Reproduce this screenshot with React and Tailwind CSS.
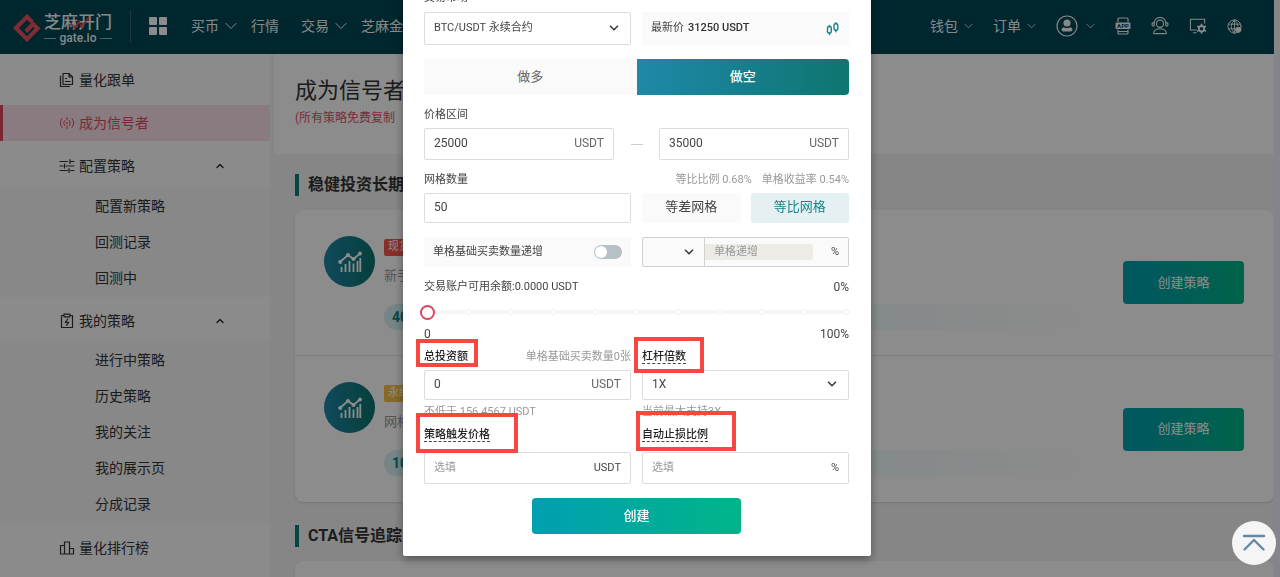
import { useState } from "react";
import { FiChevronDown, FiChevronUp } from "react-icons/fi";

/* ================= ICONS ================= */
const stroke = {
  fill: "none",
  stroke: "currentColor",
  strokeWidth: 1.2,
  strokeLinecap: "round",
  strokeLinejoin: "round",
};

const CopyIcon = () => (
  <svg viewBox="0 0 16 16" className="w-4 h-4" {...stroke}>
    <path d="M4 1.500h6l3.500 3.500v7.500H4zM10 1.500V5h3.500M6.500 6.500h1M6.500 9.500h4.500M1.500 4v10.500h9" />
  </svg>
);

const SignalIcon = () => (
  <svg viewBox="0 0 16 16" className="w-4 h-4" {...stroke} strokeWidth="1">
    <path d="M8 2.500v2.500M8 11v2.500M5.500 5.500q-1.800 2.500 0 5M3 3.500q-3.500 4.500 0 9M10.500 5.500q1.800 2.500 0 5M13 3.500q3.500 4.500 0 9" />
    <circle cx="8" cy="8" r=".9" fill="currentColor" stroke="none" />
  </svg>
);

const SlidersIcon = () => (
  <svg viewBox="0 0 16 16" className="w-4 h-4" {...stroke}>
    <path d="M1 3.500h7.500M11.500 3.500H15M11 1.500v4M1 8h3M7 8h8M5.500 6v4M1 12.500h7.500M11.500 12.500H15M10 10.500v4" />
  </svg>
);

const ClipboardIcon = () => (
  <svg viewBox="0 0 16 16" className="w-4 h-4" {...stroke}>
    <path d="M5 2.500H2.500v12h11v-12H11M5 1.200h6v2.600H5zM8.800 6 6.300 9.300h3.400L7.400 12.300" />
  </svg>
);

const RankIcon = () => (
  <svg viewBox="0 0 16 16" className="w-4 h-4" {...stroke}>
    <path d="M1.500 5.500h4v8.500h-4zM5.500 2h5v12h-5zM10.500 8.500h4V14h-4z" />
  </svg>
);

const ThinChevron = ({ small }) => (
  <svg viewBox="0 0 12 8" className={small ? "w-[9px] h-1.5" : "w-3 h-2"} {...stroke} strokeWidth="1">
    <path d="m1 1.500 5 5 5-5" />
  </svg>
);

const LogoMark = () => (
  <svg viewBox="0 0 27 27" className="w-7 h-7" fill="none" stroke="#e8525c" strokeWidth="4">
    <path d="m18.600 7.800-5.100-5L2.800 13.500l10.700 10.700 10.200-10.300-4.200-4.200-7.200 7.200" />
  </svg>
);

const LogoTick = () => (
  <svg viewBox="0 0 20 14" className="absolute left-[26px] top-1 w-5 h-3.5" fill="none" stroke="#f0454f" strokeWidth="1.500">
    <path d="m1 8 4 4.500L9 5.500l2.500 5.500L19 1" />
  </svg>
);

const ChartIcon = () => (
  <svg viewBox="0 0 24 22" className="w-6 h-6" fill="none" stroke="#fff">
    <path d="M3.500 21v-5M7.500 21v-8M11.500 21V10M15.500 21v-8.500M19.500 21v-11M22.300 21V7" strokeWidth="1.800" />
    <path d="m2 11 8-7 5.500 4L22 2.500" strokeWidth="1.800" />
    <g fill="#fff" stroke="none">
      <circle cx="2.200" cy="11" r="2" />
      <circle cx="10" cy="4" r="2" />
      <circle cx="15.500" cy="8" r="2" />
      <circle cx="22" cy="2.500" r="2" />
    </g>
  </svg>
);

const UserIcon = () => (
  <svg viewBox="0 0 22 22" className="w-[22px] h-[22px]" {...stroke}>
    <circle cx="11" cy="11" r="10" />
    <circle cx="11" cy="8" r="3.600" fill="currentColor" stroke="none" />
    <path d="M5.500 14.500q0-2 2.500-2.300 3 1.800 6 0 2.500.3 2.500 2.300 0 2-2 2h-7q-2 0-2-2z" fill="currentColor" stroke="none" />
  </svg>
);

const AppIcon = () => (
  <svg viewBox="0 0 16 18" className="w-4 h-[18px]" {...stroke}>
    <path d="M3 4.500V2q0-1 1-1h8q1 0 1 1v2.500M3 13v3q0 1 1 1h8q1 0 1-1v-3M3 14.500h10" />
    <rect x=".5" y="5.500" width="15" height="6.500" rx="1" fill="currentColor" stroke="none" />
    <text x="8" y="11" textAnchor="middle" fontSize="6" fontWeight="700" fill="#004554" stroke="none">APP</text>
  </svg>
);

const ServiceIcon = () => (
  <svg viewBox="0 0 20 20" className="w-[18px] h-[18px]" {...stroke}>
    <circle cx="10" cy="7.500" r="4" />
    <path d="M3.500 6.500a6.500 6 0 0 1 13 0M3.500 6.500H2q-.8 0-.8 1v1.500q0 1 .8 1h1.500zM16.500 6.500H18q.8 0 .8 1v1.500q0 1-.8 1h-1.500zM4 18.500q-1.500 0-1-1.500 1.500-4 7-4t7 4q.5 1.500-1 1.500z" />
  </svg>
);

const MonitorIcon = () => (
  <svg viewBox="0 0 20 18" className="w-[18px] h-4" {...stroke}>
    <path d="M8 13.500H1.500v-12h16V6M5 16.500h3" />
    <circle cx="14" cy="12" r="3" strokeWidth="2" />
    <path d="M14 7.200v.8M14 16v.8M9.800 9.600l.8.4M17.400 14l.8.4M9.800 14.400l.8-.4M17.400 10l.8-.4" strokeWidth="2" />
  </svg>
);

const GlobeIcon = () => (
  <svg viewBox="0 0 16 16" className="w-[15px] h-[15px]" {...stroke} strokeWidth="1">
    <circle cx="8" cy="8" r="7" />
    <path d="M8 1v14M1.500 5.500h13M1.500 10.500H9M8 1Q4.500 4 4.500 8T8 15M8 1q3.500 3 3.500 6" />
    <circle cx="12" cy="11.500" r="2.800" fill="currentColor" />
  </svg>
);

const CandleIcon = () => (
  <svg viewBox="0 0 14 14" className="w-3.5 h-3.5" {...stroke} stroke="#16868a" strokeWidth="1.400">
    <rect x="1.500" y="4.500" width="3.800" height="6.500" rx="1.500" />
    <rect x="8" y="1.800" width="3.800" height="6.500" rx="1.500" />
    <path d="M3.400 3.500v1M3.400 11v1.500M9.900.7v1M9.900 8.300v1.500" />
  </svg>
);

/* ================= DATA ================= */
const configLinks = ["配置新策略", "回测记录", "回测中"];
const strategyLinks = ["进行中策略", "历史策略", "我的关注", "我的展示页", "分成记录"];

const strategies = [
  { type: "现货", desc: "新手", tag: "40", badge: "bg-[#fa5548]" },
  { type: "永续", desc: "网格", tag: "10", badge: "bg-[#f7bd48]" },
];

/* ================= HEADER ================= */
function NavLink({ children, arrow, small }) {
  return (
    <a href="#" className="flex items-center gap-1.5 whitespace-nowrap">
      {children}
      {arrow && <ThinChevron small={small} />}
    </a>
  );
}

function Header() {
  return (
    <header className="h-[54px] bg-[#004554] text-[#f4f8f9] text-sm flex items-center justify-between pl-[13px] pr-8">
      <div className="flex items-center pb-0.5">
        <a href="#" className="flex items-center gap-[3px] pt-1">
          <LogoMark />
          <span className="relative flex flex-col">
            <span className="text-[17px] leading-5 font-medium">芝麻开门</span>
            <LogoTick />
            <span className="flex items-center gap-1 text-xs leading-3 font-medium">
              <i className="h-px flex-1 bg-white/60" />
              gate.io
              <i className="h-px flex-1 bg-white/60" />
            </span>
          </span>
        </a>
        <div className="w-px h-8 bg-white/20 ml-[18px] mr-[18px]" />
        <button aria-label="菜单" className="grid grid-cols-2 gap-0.5 mr-6">
          <i className="w-2 h-2 rounded-[1px] bg-white" />
          <i className="w-2 h-2 rounded-[1px] bg-white" />
          <i className="w-2 h-2 rounded-[1px] bg-white" />
          <i className="w-2 h-2 rounded-[1px] bg-white" />
        </button>
        <nav className="flex items-center gap-3.5">
          <NavLink arrow>买币</NavLink>
          <span className="mr-2">
            <NavLink>行情</NavLink>
          </span>
          <NavLink arrow>交易</NavLink>
          <NavLink>芝麻金</NavLink>
        </nav>
      </div>

      <div className="flex items-center gap-5 pb-0.5">
        <NavLink arrow small>钱包</NavLink>
        <NavLink arrow small>订单</NavLink>
        <button aria-label="账户" className="flex items-center gap-2">
          <UserIcon />
          <ThinChevron small />
        </button>
        <button aria-label="下载"><AppIcon /></button>
        <button aria-label="客服"><ServiceIcon /></button>
        <button aria-label="设置"><MonitorIcon /></button>
        <button aria-label="语言"><GlobeIcon /></button>
      </div>
    </header>
  );
}

/* ================= SIDEBAR ================= */
function SubLinks({ items }) {
  return (
    <ul className="bg-[#f7f7f7] py-px">
      {items.map((item) => (
        <li key={item}>
          <a href="#" className="flex items-center h-9 pl-[95px]">{item}</a>
        </li>
      ))}
    </ul>
  );
}

function Sidebar() {
  return (
    <aside className="w-[270px] shrink-0 bg-[#fefefe] text-[#333] text-sm mr-1">
      <a href="#" className="flex items-center gap-1 h-[51px] pl-[59px]">
        <CopyIcon />
        量化跟单
      </a>
      <a href="#" className="flex items-center gap-1 h-9 pl-14 border-l-3 border-[#e04a63] bg-[#fae1e7] text-[#e04a63]">
        <SignalIcon />
        成为信号者
      </a>
      <button className="flex items-center gap-1 w-full h-[46px] pl-[59px] pr-11 pt-1">
        <SlidersIcon />
        配置策略
        <FiChevronUp className="ml-auto w-3 h-3" strokeWidth={3} />
      </button>
      <SubLinks items={configLinks} />
      <button className="flex items-center gap-1 w-full h-[44px] pl-[59px] pr-11 pt-1">
        <ClipboardIcon />
        我的策略
        <FiChevronUp className="ml-auto w-3 h-3" strokeWidth={3} />
      </button>
      <SubLinks items={strategyLinks} />
      <a href="#" className="flex items-center gap-1 h-[46px] pl-[59px] pt-1">
        <RankIcon />
        量化排行榜
      </a>
    </aside>
  );
}

/* ================= MAIN ================= */
function SectionTitle({ children }) {
  return (
    <h2 className="flex items-center h-[22px] border-l-4 border-[#088080] pl-[9px] mb-3.5 text-base font-bold text-[#333]">
      {children}
    </h2>
  );
}

function StrategyRow({ item }) {
  return (
    <div className="flex items-start h-[146px] pl-[29px] pr-[30px] border-b border-[#eaeaea] last:border-b-0">
      <div className="mt-[26px] w-[51px] h-[51px] rounded-full bg-linear-to-r from-[#1f86a8] to-[#0c746c] flex items-center justify-center">
        <ChartIcon />
      </div>
      <div className="flex-1 ml-[9px] mt-[29px]">
        <div className={`${item.badge} flex items-center w-fit h-[17px] px-1 rounded-xs text-white text-[11px]`}>
          {item.type}
        </div>
        <p className="text-[13px] leading-5 mt-2.5 text-[#999]">{item.desc}</p>
        <div className="mt-[18px] h-[26px] w-[700px] max-w-full rounded-full px-2 flex items-center bg-linear-to-r from-[#d5f1f3] to-white text-sm font-bold text-[#0c8187]">
          {item.tag}
        </div>
      </div>
      <button className="self-center w-[121px] h-[43px] rounded bg-linear-to-r from-[#009fb0] to-[#00b487] text-[13px] text-white">
        创建策略
      </button>
    </div>
  );
}

function Main() {
  return (
    <main className="flex-1">
      <div className="h-[100px] bg-white pl-[21px] pt-[22px]">
        <h1 className="text-[22px] leading-[30px] text-[#333]">成为信号者</h1>
        <p className="text-xs leading-6 text-[#e0506a]">(所有策略免费复制</p>
      </div>
      <div className="pl-[21px] pt-5">
        <SectionTitle>稳健投资长期</SectionTitle>
        <div className="bg-white rounded-lg shadow-sm mb-[23px]">
          {strategies.map((s) => (
            <StrategyRow key={s.type} item={s} />
          ))}
        </div>
        <SectionTitle>CTA信号追踪</SectionTitle>
        <div className="bg-white rounded-lg shadow-sm h-40" />
      </div>
    </main>
  );
}

/* ================= MODAL ================= */
const label = "flex items-center justify-between h-5 pt-0.5";
const box = "flex items-center border border-[#dcdcdc] rounded-xs bg-white px-[9px]";
const field = "flex-1 min-w-0 bg-transparent outline-none placeholder:text-[#999]";

function Marked({ htmlFor, dashed, frame, children }) {
  return (
    <label htmlFor={htmlFor} className="relative font-medium text-[#222]">
      <span className={dashed ? "border-b border-dashed border-[#444]" : ""}>{children}</span>
      <i className={`absolute z-10 border-4 border-[#fa4640] pointer-events-none ${frame}`} />
    </label>
  );
}

function CreateModal() {
  const [side, setSide] = useState("short");
  const [mode, setMode] = useState("ratio");
  const [percent, setPercent] = useState(0);

  return (
    <form
      onSubmit={(e) => e.preventDefault()}
      className="w-[468px] shrink-0 bg-white pl-[21px] pr-[22px] pb-[22px] pt-4 rounded-xs text-[11px] text-[#444] shadow-[0_3px_10px_rgba(0,0,0,0.4)]"
    >
      <label htmlFor="market" className="flex items-center h-5 mb-1">交易市场</label>
      <div className="grid grid-cols-2 gap-[11px]">
        <div className="relative">
          <select id="market" className={`${box} appearance-none w-full h-[33px]`}>
            <option>BTC/USDT 永续合约</option>
          </select>
          <FiChevronDown className="absolute right-2.5 top-[9px] w-3.5 h-3.5 pointer-events-none" strokeWidth={3} />
        </div>
        <div className="flex items-center bg-[#fafafa] px-[9px]">
          最新价<b className="ml-1 font-medium text-[#333]">31250 USDT</b>
          <span className="ml-auto"><CandleIcon /></span>
        </div>
      </div>

      {/* SIDE */}
      <div className="grid grid-cols-2 h-9 mt-3.5 text-[13px] rounded overflow-hidden">
        <button
          type="button"
          onClick={() => setSide("long")}
          className={side === "long" ? "bg-linear-to-r from-[#1f88aa] to-[#0f756f] text-white" : "bg-[#fafafa] text-[#666]"}
        >
          做多
        </button>
        <button
          type="button"
          onClick={() => setSide("short")}
          className={side === "short" ? "bg-linear-to-r from-[#1f88aa] to-[#0f756f] text-white font-medium" : "bg-[#fafafa] text-[#666]"}
        >
          做空
        </button>
      </div>

      {/* PRICE RANGE */}
      <label htmlFor="low" className={`${label} mt-[9px] mb-1`}>价格区间</label>
      <div className="flex items-center justify-between h-8 text-xs">
        <div className={`${box} w-[190px] h-full pb-0.5`}>
          <input id="low" defaultValue="25000" className={field} />
          <span className="text-[#666]">USDT</span>
        </div>
        <i className="w-3 h-px bg-[#ccc]" />
        <div className={`${box} w-[190px] h-full pb-0.5`}>
          <input aria-label="最高价" defaultValue="35000" className={field} />
          <span className="text-[#666]">USDT</span>
        </div>
      </div>

      {/* GRID COUNT */}
      <div className={`${label} mt-[9px] mb-1`}>
        <label htmlFor="count">网格数量</label>
        <span className="text-[#999] flex gap-2.5">
          <span>等比比例 0.68%</span>
          <span>单格收益率 0.54%</span>
        </span>
      </div>
      <div className="grid grid-cols-2 gap-[11px] h-[30px] text-[13px]">
        <div className={`${box} pb-0.5`}>
          <input id="count" defaultValue="50" className={`${field} text-xs`} />
        </div>
        <div className="grid grid-cols-2 gap-2.5">
          <button
            type="button"
            onClick={() => setMode("diff")}
            className={mode === "diff" ? "rounded-xs pb-0.5 bg-[#e5f0f2] text-[#168589]" : "rounded-xs pb-0.5 bg-[#fafafa]"}
          >
            等差网格
          </button>
          <button
            type="button"
            onClick={() => setMode("ratio")}
            className={mode === "ratio" ? "rounded-xs pb-0.5 bg-[#e5f0f2] text-[#168589]" : "rounded-xs pb-0.5 bg-[#fafafa]"}
          >
            等比网格
          </button>
        </div>
      </div>

      {/* INCREMENT */}
      <div className="grid grid-cols-2 gap-[11px] h-[30px] mt-3.5">
        <div className="flex items-center justify-between bg-[#fafafa] px-[9px]">
          <label htmlFor="increase">单格基础买卖数量递增</label>
          <input
            id="increase"
            type="checkbox"
            className="appearance-none w-7 h-3.5 rounded-full bg-[#b4c1c6] p-px before:block before:w-3 before:h-3 before:rounded-full before:bg-white checked:before:ml-3.5"
          />
        </div>
        <div className="flex items-center border border-[#d0d0d0] rounded-xs bg-[#fafafa]">
          <div className="relative w-[62px] h-full border-r border-[#d0d0d0]">
            <select aria-label="递增方式" className="appearance-none w-full h-full" defaultValue="">
              <option value=""></option>
            </select>
            <FiChevronDown className="absolute right-2 top-[7px] w-3.5 h-3.5 pointer-events-none" strokeWidth={3} />
          </div>
          <input
            aria-label="单格递增"
            placeholder="单格递增"
            className="w-[108px] h-4 rounded-xs bg-[#ecebe6] px-[9px] placeholder:text-[#999]"
          />
          <span className="ml-auto mr-[9px]">%</span>
        </div>
      </div>

      {/* BALANCE */}
      <div className={`${label} mt-[9px]`}>
        <label htmlFor="percent">交易账户可用余额:0.0000 USDT</label>
        <span className="text-xs">{percent}%</span>
      </div>
      <div className="relative h-8 -ml-1 flex items-center">
        <i className="absolute left-1 right-0 h-1 rounded-full bg-[#f6f6f6]" />
        <div className="absolute left-1 right-0 flex justify-between">
          {Array.from({ length: 11 }, (_, i) => (
            <i key={i} className="w-1.5 h-1.5 rounded-full bg-white border border-[#f0f0f0]" />
          ))}
        </div>
        <input
          id="percent"
          type="range"
          value={percent}
          onChange={(e) => setPercent(Number(e.target.value))}
          className="relative w-full h-4 appearance-none bg-transparent [&::-webkit-slider-thumb]:appearance-none [&::-webkit-slider-thumb]:w-[15px] [&::-webkit-slider-thumb]:h-[15px] [&::-webkit-slider-thumb]:rounded-full [&::-webkit-slider-thumb]:bg-white [&::-webkit-slider-thumb]:border-2 [&::-webkit-slider-thumb]:border-solid [&::-webkit-slider-thumb]:border-[#dc4660]"
        />
      </div>
      <div className="flex justify-between text-xs leading-3 mb-1.5">
        <span>0</span>
        <span>100%</span>
      </div>

      {/* INVEST / LEVERAGE */}
      <div className="grid grid-cols-2 gap-x-[11px]">
        <div>
          <div className={`${label} mb-1`}>
            <Marked htmlFor="total" frame="-left-2 -right-2.5 -top-2.5 -bottom-0.5">总投资额</Marked>
            <span className="text-[#999]">单格基础买卖数量0张</span>
          </div>
          <div className={`${box} h-[30px] pb-0.5 text-xs`}>
            <input id="total" defaultValue="0" className={field} />
            <span className="text-[#666]">USDT</span>
          </div>
          <p className="h-5 leading-5 mt-0.5 text-[#999]">不低于 156.4567 USDT</p>
        </div>
        <div>
          <div className={`${label} mb-1`}>
            <Marked htmlFor="leverage" dashed frame="-left-2 -right-[18px] -top-3 -bottom-2">杠杆倍数</Marked>
          </div>
          <div className="relative">
            <select id="leverage" className={`${box} appearance-none w-full h-[30px] pb-0.5 text-xs`}>
              <option>1X</option>
            </select>
            <FiChevronDown className="absolute right-2.5 top-[7px] w-3.5 h-3.5 pointer-events-none" strokeWidth={3} />
          </div>
          <p className="h-5 leading-5 mt-0.5 text-[#999]">当前最大支持3X</p>
        </div>
      </div>

      {/* TRIGGER / STOP LOSS */}
      <div className="grid grid-cols-2 gap-x-[11px] mt-0.5">
        <div>
          <div className={`${label} mb-2`}>
            <Marked htmlFor="trigger" dashed frame="-left-2 -right-7 -top-3.5 -bottom-2.5">策略触发价格</Marked>
          </div>
          <div className={`${box} h-8`}>
            <input id="trigger" placeholder="选填" className={field} />
            <span>USDT</span>
          </div>
        </div>
        <div>
          <div className={`${label} mb-2`}>
            <Marked htmlFor="stop" dashed frame="-left-1.5 -right-7 -top-4 -bottom-2">自动止损比例</Marked>
          </div>
          <div className={`${box} h-8`}>
            <input id="stop" placeholder="选填" className={field} />
            <span>%</span>
          </div>
        </div>
      </div>

      <button
        type="submit"
        className="block mx-auto mt-3.5 w-[209px] h-9 rounded bg-linear-to-r from-[#009fb0] to-[#00b487] text-[13px] font-medium text-white"
      >
        创建
      </button>
    </form>
  );
}

export default function App() {
  return (
    <div className="h-screen overflow-hidden flex bg-[#f4f4f4] font-[Roboto,'Noto_Sans_CJK_SC',sans-serif]">
      <div className="flex-1 min-w-0">
        <Header />
        <div className="flex">
          <Sidebar />
          <Main />
        </div>
      </div>
      <div className="w-1.5 pt-[54px]">
        <div className="h-full rounded-t-full bg-[#f1f1fb]" />
      </div>

      <div className="fixed inset-0 bg-black/45 flex items-end justify-center pr-1.5 pb-[21px] overflow-hidden">
        <CreateModal />
      </div>

      <button
        aria-label="回到顶部"
        className="fixed right-1 bottom-3 w-11 h-11 rounded-full bg-[#f5f5f5] flex items-center justify-center"
      >
        <svg viewBox="0 0 24 18" className="w-6 h-[18px]" fill="none" stroke="#6488a2" strokeWidth="2.400" strokeLinecap="round" strokeLinejoin="round">
          <path d="M2 2h20M2.500 15.500 12 6l9.500 9.500" />
        </svg>
      </button>
    </div>
  );
}
